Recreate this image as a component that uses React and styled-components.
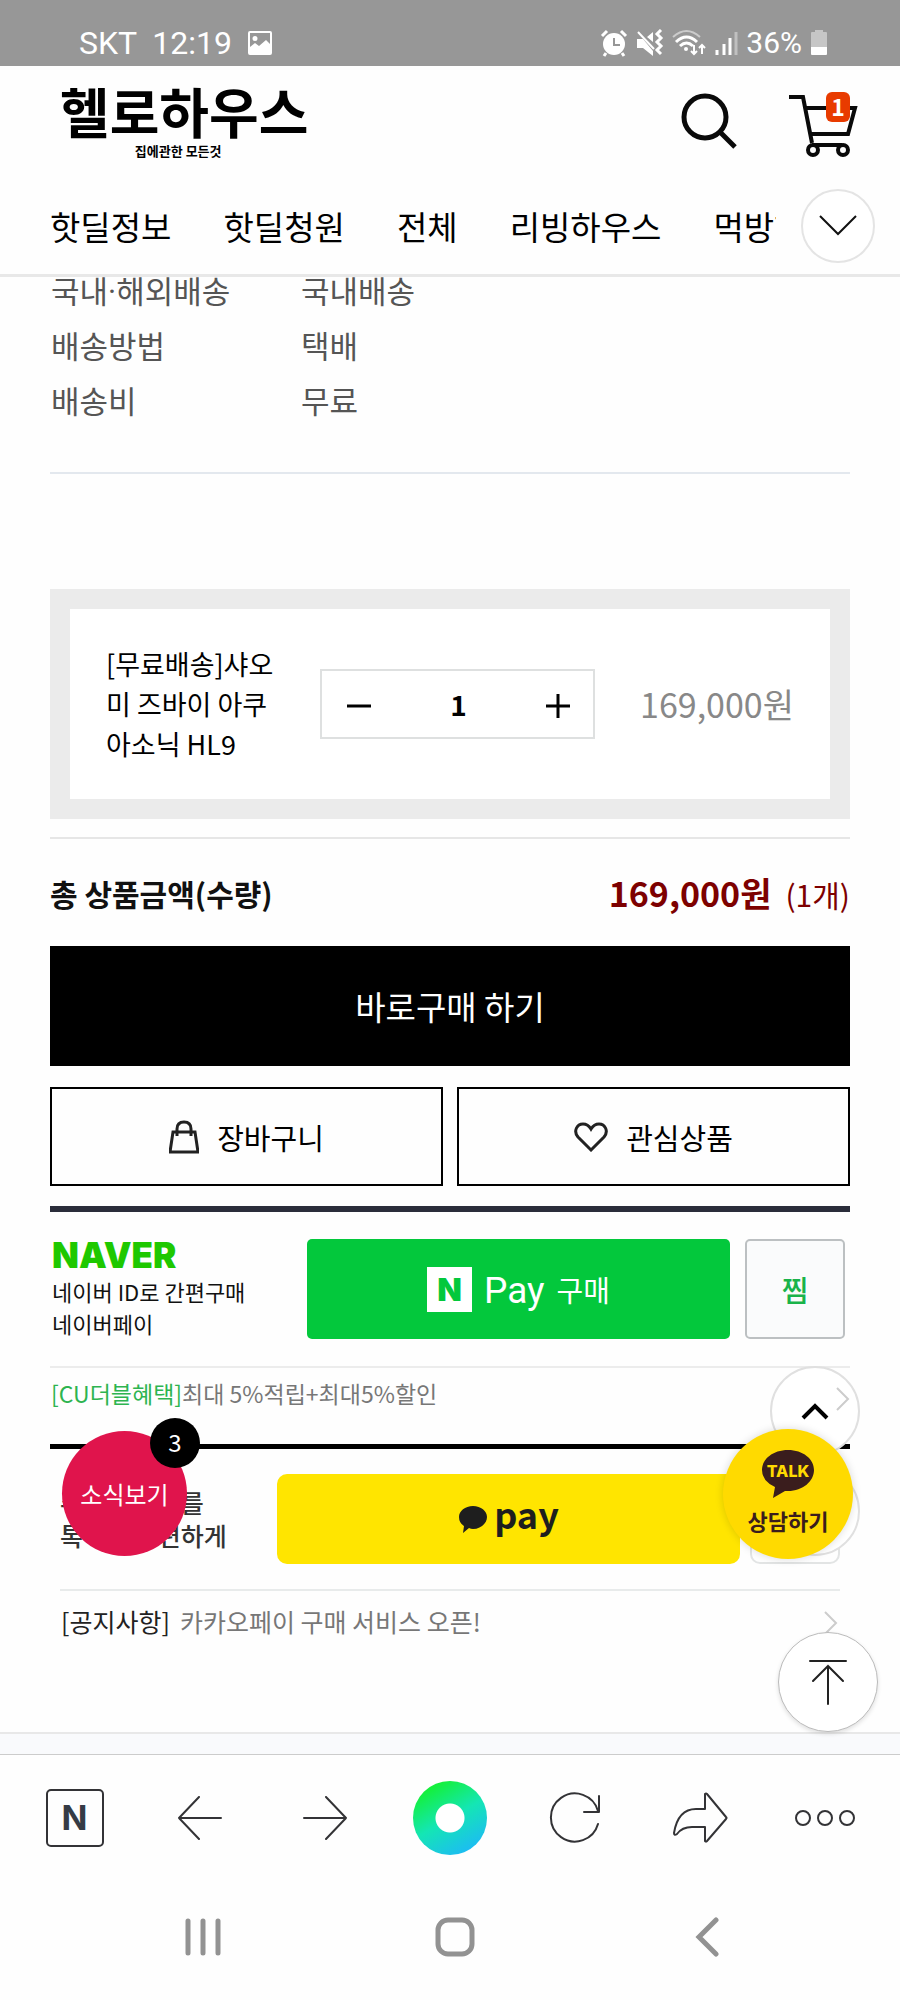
import { useState } from "react";
import styled, { createGlobalStyle } from "styled-components";

const colors = {
    line: "#e8e8e8",
    naver: "#03c83c",
    kakao: "#ffe500",
    news: "#e0144c",
    price: "#7d0000",
    icon: "#333336",
};

const categories = ["핫딜정보", "핫딜청원", "전체", "리빙하우스", "먹방하우스"];

const delivery = [
    { label: "국내·해외배송", value: "국내배송" },
    { label: "배송방법", value: "택배" },
    { label: "배송비", value: "무료" },
];

const PRICE = 169000;

const StatusBar = () => (
    <StatusDiv>
        <div className="side">
            <span>SKT</span>
            <span>12:19</span>
            <svg width="26" height="26" viewBox="0 0 26 26">
                <path
                    fill="#fff"
                    fillRule="evenodd"
                    d="M3 1h20q2 0 2 2v20q0 2-2 2H3q-2 0-2-2V3q0-2 2-2zM3 3v14l5-4 4 3 7-6 4 4V3zM8 6a2.5 2.5 0 1 1 0 5a2.5 2.5 0 0 1 0-5z"
                />
            </svg>
        </div>
        <div className="side icons">
            <svg width="28" height="28" viewBox="0 0 28 28">
                <circle cx="14" cy="15" r="11" fill="#fff" />
                <path
                    d="M2 7l5-5M26 7l-5-5M6 24l-2 3M22 24l2 3"
                    stroke="#fff"
                    strokeWidth="3"
                />
                <path d="M14 9v7h6" fill="none" stroke="#979797" strokeWidth="2" />
            </svg>
            <svg width="28" height="28" viewBox="0 0 28 28">
                <path d="M1 10h6l10 12v5L7 19H1zM17 3v10l-6-5z" fill="#fff" />
                <path d="M2 3l16 17" stroke="#fff" strokeWidth="2" />
                <path
                    d="M25 1l-4 4 4 4-4 4 4 4-4 4 4 4"
                    fill="none"
                    stroke="#fff"
                    strokeWidth="3"
                />
            </svg>
            <svg width="34" height="28" viewBox="0 0 34 28" fill="none" stroke="#fff">
                <path d="M1 8q13.5-12 27 0" strokeWidth="2" opacity=".5" />
                <path d="M4 13q10.5-10 21 0M8 17q6.5-6 13 0" strokeWidth="3" />
                <circle cx="14" cy="20" r="2" fill="#fff" stroke="none" />
                <path
                    d="M22 16v9m-3-3l3 3 3-3M30 25v-9m-3 3l3-3 3 3"
                    strokeWidth="2"
                />
            </svg>
            <svg width="24" height="28" viewBox="0 0 24 28" stroke="#fff" strokeWidth="3">
                <path d="M3 21v5M10 15v11M16 9v17" />
                <path d="M22 3v23" opacity=".4" />
            </svg>
            <span className="percent">36%</span>
            <svg width="18" height="28" viewBox="0 0 18 28" fill="#fff">
                <path d="M5 1h8v2h3q1 0 1 1v15H1V4q0-1 1-1h3z" opacity=".45" />
                <path d="M1 18h16v7q0 1-1 1H2q-1 0-1-1z" />
            </svg>
        </div>
    </StatusDiv>
);

const Header = () => (
    <HeaderDiv>
        <div className="top">
            <Logo href="#home">
                <strong>헬로하우스</strong>
                <small>집에관한 모든것</small>
            </Logo>
            <div className="actions">
                <IconButton aria-label="검색">
                    <svg width="58" height="58" viewBox="0 0 58 58" fill="none" stroke="#0a0a0a">
                        <circle cx="25" cy="25" r="21" strokeWidth="5" />
                        <path d="M40 40l15 15" strokeWidth="5" />
                    </svg>
                </IconButton>
                <IconButton aria-label="장바구니 보기">
                    <svg width="70" height="66" viewBox="0 0 70 66" fill="none" stroke="#0a0a0a" strokeWidth="4">
                        <path d="M1 5h14l9 46M17 16h50l-7 26H23M24 53h30" />
                        <circle cx="25" cy="58" r="5" />
                        <circle cx="55" cy="58" r="5" />
                    </svg>
                    <span className="count">1</span>
                </IconButton>
            </div>
        </div>
        <div className="nav">
            <Categories>
                {categories.map((name) => (
                    <a href="#category" key={name}>
                        {name}
                    </a>
                ))}
            </Categories>
            <RoundButton $size={74} aria-label="카테고리 펼치기">
                <svg width="40" height="24" viewBox="0 0 40 24" fill="none" stroke="#111" strokeWidth="2">
                    <path d="M2 2l18 18L38 2" />
                </svg>
            </RoundButton>
        </div>
    </HeaderDiv>
);

const OptionBox = ({ count, setCount }) => (
    <OptionDiv>
        <p className="name">[무료배송]샤오미 즈바이 아쿠아소닉 HL9</p>
        <Stepper>
            <button aria-label="수량 감소" onClick={() => setCount(Math.max(1, count - 1))}>
                <svg width="24" height="24" viewBox="0 0 24 24" stroke="#000" strokeWidth="3">
                    <path d="M0 12h24" />
                </svg>
            </button>
            <input
                aria-label="수량"
                value={count}
                onChange={(e) => setCount(Number(e.target.value) || 1)}
            />
            <button aria-label="수량 증가" onClick={() => setCount(count + 1)}>
                <svg width="24" height="24" viewBox="0 0 24 24" stroke="#000" strokeWidth="3">
                    <path d="M0 12h24M12 0v24" />
                </svg>
            </button>
        </Stepper>
        <p className="price">{(PRICE * count).toLocaleString("en-US")}원</p>
    </OptionDiv>
);

const NaverPay = () => (
    <NaverDiv>
        <div className="row">
            <div className="text">
                <strong>NAVER</strong>
                <p>네이버 ID로 간편구매</p>
                <p>네이버페이</p>
            </div>
            <button className="pay">
                <span className="n">N</span>
                <span className="latin">Pay</span>
                <span>구매</span>
            </button>
            <button className="zzim">찜</button>
        </div>
        <a className="benefit" href="#benefit">
            <span>
                <em>[CU더블혜택]</em>최대 5%적립+최대5%할인
            </span>
            <Arrow />
        </a>
    </NaverDiv>
);

const KakaoPay = () => (
    <KakaoDiv>
        <div className="row">
            <p className="text">
                주문과 결제를
                <br />
                톡에서 간편하게
            </p>
            <button className="pay">
                <svg width="30" height="29" viewBox="0 0 30 29" fill="#1e1e1e">
                    <path d="M15 1c8 0 14 5 14 11s-6 12-14 12q-2 0-4-1l-6 5 1-7Q1 18 1 12C1 6 7 1 15 1z" />
                </svg>
                <span>pay</span>
            </button>
            <button className="wish" aria-label="찜하기" />
        </div>
        <a className="notice" href="#notice">
            <span>
                <em>[공지사항]</em>카카오페이 구매 서비스 오픈!
            </span>
            <Arrow />
        </a>
    </KakaoDiv>
);

const Arrow = () => (
    <svg className="arrow" width="14" height="26" viewBox="0 0 14 26" fill="none" stroke="#ccc" strokeWidth="2">
        <path d="M1 2l11 11L1 24" />
    </svg>
);

const Floating = () => (
    <>
        <NewsButton>
            소식보기
            <span>3</span>
        </NewsButton>
        <FloatButton $size={90} $right={40} $bottom={276} aria-label="위로">
            <svg width="28" height="18" viewBox="0 0 28 18" fill="none" stroke="#000" strokeWidth="4">
                <path d="M2 16L14 4l12 12" />
            </svg>
        </FloatButton>
        <FloatButton $size={90} $right={40} $bottom={176} aria-label="아래로" />
        <TalkButton>
            <svg width="54" height="50" viewBox="0 0 54 50">
                <path
                    fill="#3a1d1d"
                    d="M27 1c15 0 26 9 26 20S42 42 27 42h-3l-12 7 2-11Q1 32 1 21C1 10 12 1 27 1z"
                />
                <text x="27" y="28" textAnchor="middle">
                    TALK
                </text>
            </svg>
            상담하기
        </TalkButton>
        <FloatButton $size={100} $right={22} $bottom={0} $dark aria-label="맨 위로">
            <svg width="40" height="48" viewBox="0 0 40 48" fill="none" stroke="#222" strokeWidth="2" strokeLinecap="round">
                <path d="M2 3h36M20 46V8M5 23L20 8l15 15" />
            </svg>
        </FloatButton>
    </>
);

const Toolbar = () => (
    <ToolbarNav>
        <button aria-label="네이버 홈">
            <span className="n">N</span>
        </button>
        <button aria-label="뒤로">
            <svg width="46" height="44" viewBox="0 0 46 44">
                <path d="M44 22H2M22 1L2 22l20 21" />
            </svg>
        </button>
        <button aria-label="앞으로">
            <svg width="46" height="44" viewBox="0 0 46 44">
                <path d="M2 22h42M24 1l20 21-20 21" />
            </svg>
        </button>
        <button aria-label="그린닷">
            <span className="dot" />
        </button>
        <button aria-label="새로고침">
            <svg width="52" height="52" viewBox="0 0 52 52">
                <path d="M49 32A24 24 0 1 1 49 19M50 4v16H35" />
            </svg>
        </button>
        <button aria-label="공유">
            <svg width="56" height="52" viewBox="0 0 56 52">
                <path d="M33 2q1-1 2 0l19 23q1 1 0 2L35 49q-1 1-2 0V35H20Q10 35 5 42q-3 2-3-1Q6 17 24 17h9z" />
            </svg>
        </button>
        <button aria-label="더보기">
            <svg width="62" height="18" viewBox="0 0 62 18">
                <circle cx="9" cy="9" r="7" />
                <circle cx="31" cy="9" r="7" />
                <circle cx="53" cy="9" r="7" />
            </svg>
        </button>
    </ToolbarNav>
);

const SystemBar = () => (
    <SystemNav>
        <button aria-label="최근 앱">
            <svg width="36" height="40" viewBox="0 0 36 40">
                <path d="M3 4v32M18 4v32M33 4v32" />
            </svg>
        </button>
        <button aria-label="홈 화면">
            <svg width="40" height="40" viewBox="0 0 40 40">
                <rect x="3" y="3" width="34" height="34" rx="10" />
            </svg>
        </button>
        <button aria-label="이전">
            <svg width="24" height="40" viewBox="0 0 24 40">
                <path d="M21 3L4 20l17 17" />
            </svg>
        </button>
    </SystemNav>
);

const App = () => {
    const [count, setCount] = useState(1);

    return (
        <>
            <GlobalStyle />
            <StatusBar />
            <Header />
            <Main>
                <Delivery>
                    {delivery.map(({ label, value }) => (
                        <div key={label}>
                            <dt>{label}</dt>
                            <dd>{value}</dd>
                        </div>
                    ))}
                </Delivery>
                <OptionBox count={count} setCount={setCount} />
                <Total>
                    <strong>총 상품금액(수량)</strong>
                    <p>
                        <b>{(PRICE * count).toLocaleString("en-US")}원</b>
                        <span>({count}개)</span>
                    </p>
                </Total>
                <BuyButton>바로구매 하기</BuyButton>
                <SubButtons>
                    <button>
                        <svg width="30" height="34" viewBox="0 0 30 34">
                            <path d="M4 12h22l3 20H1zM8 16v-7q0-7 7-7t7 7v7" />
                        </svg>
                        장바구니
                    </button>
                    <button>
                        <svg width="34" height="30" viewBox="0 0 34 30">
                            <path d="M17 28L4 15C-1 9 3 2 9 2q5 0 8 5q3-5 8-5c6 0 10 7 5 13z" />
                        </svg>
                        관심상품
                    </button>
                </SubButtons>
                <NaverPay />
                <KakaoPay />
                <Floating />
            </Main>
            <Band />
            <Toolbar />
            <SystemBar />
        </>
    );
};

const GlobalStyle = createGlobalStyle`
    * {
        box-sizing: border-box;
        margin: 0;
        padding: 0;
    }
    body {
        background: #fefefe;
        color: #111;
        font-family: "Noto Sans CJK KR", sans-serif;
    }
    button {
        border: none;
        background: none;
        color: inherit;
        font-family: inherit;
        cursor: pointer;
    }
    a {
        color: inherit;
        text-decoration: none;
    }
    em {
        font-style: normal;
    }
    svg {
        display: block;
        flex: none;
    }
`;

const StatusDiv = styled.div`
    height: 66px;
    padding: 20px 72px 0 79px;
    display: flex;
    justify-content: space-between;
    background: #979797;
    color: #fff;
    font-family: Roboto, sans-serif;
    font-size: 32px;
    line-height: 46px;

    .side {
        display: flex;
        align-items: center;
        gap: 15px;
    }
    .icons {
        gap: 8px;
    }
    .percent {
        font-size: 30px;
    }
`;

const HeaderDiv = styled.header`
    position: relative;
    z-index: 1;
    background: #fefefe;
    border-bottom: 3px solid ${colors.line};

    .top {
        height: 112px;
        padding: 0 42px 0 60px;
        display: flex;
        justify-content: space-between;
    }
    .actions {
        display: flex;
        align-items: flex-start;
        gap: 50px;
        padding-top: 26px;
    }
    .nav {
        height: 96px;
        padding: 0 25px 0 50px;
        display: flex;
        align-items: center;
        gap: 25px;
    }
`;

const Logo = styled.a`
    display: flex;
    flex-direction: column;
    align-items: center;
    color: #000;

    strong {
        font-size: 54px;
        line-height: 60px;
        padding-top: 15px;
    }
    small {
        font-size: 13px;
        font-weight: 700;
        line-height: 20px;
        margin-right: 12px;
    }
`;

const IconButton = styled.button`
    position: relative;

    .count {
        position: absolute;
        top: 0;
        right: 8px;
        width: 24px;
        height: 30px;
        border-radius: 6px;
        background: #e83b00;
        color: #fff;
        font-size: 23px;
        font-weight: 700;
        line-height: 28px;
    }
`;

const Categories = styled.nav`
    flex: 1;
    display: flex;
    gap: 52px;
    overflow: hidden;
    white-space: nowrap;
    font-size: 33px;
    line-height: 52px;
    color: #000;
`;

const RoundButton = styled.button`
    flex: none;
    width: ${({ $size }) => $size}px;
    height: ${({ $size }) => $size}px;
    display: flex;
    align-items: center;
    justify-content: center;
    border: 2px solid #e4e4e4;
    border-radius: 50%;
    background: #fff;
`;

const Main = styled.main`
    position: relative;
    padding: 0 50px 81px;
    border-bottom: 2px solid ${colors.line};
`;

const Delivery = styled.dl`
    margin: -12px 0 115px;
    padding-bottom: 42px;
    border-bottom: 2px solid #e3e8ee;
    font-family: Roboto, "Noto Sans CJK KR", sans-serif;
    font-size: 31px;
    line-height: 55px;
    color: #555;

    div {
        display: grid;
        grid-template-columns: 250px 1fr;
        height: 55px;
    }
    dt,
    dd {
        padding-left: 1px;
    }
`;

const OptionDiv = styled.section`
    min-height: 230px;
    padding: 0 36px;
    display: flex;
    align-items: center;
    border: 20px solid #ebebeb;
    background: #fff;

    .name {
        width: 176px;
        margin-right: 38px;
        font-size: 27px;
        line-height: 40px;
        word-break: break-all;
        color: #000;
    }
    .price {
        flex: 1;
        text-align: right;
        font-size: 34px;
        line-height: 52px;
        color: #888;
    }
`;

const Stepper = styled.div`
    width: 275px;
    height: 70px;
    padding: 0 18px 0 20px;
    display: flex;
    align-items: center;
    justify-content: space-between;
    border: 2px solid #dee0e0;

    button {
        padding: 8px 5px 4px;
    }
    input {
        width: 100px;
        border: none;
        background: none;
        text-align: center;
        font-family: inherit;
        font-size: 28px;
        font-weight: 700;
    }
`;

const Total = styled.div`
    height: 109px;
    margin-top: 18px;
    display: flex;
    align-items: center;
    justify-content: space-between;
    border-top: 2px solid #e6e6e6;
    font-size: 30px;

    p {
        display: flex;
        align-items: baseline;
        gap: 14px;
        color: ${colors.price};
    }
    b {
        font-size: 34px;
    }
`;

const BuyButton = styled.button`
    width: 100%;
    height: 120px;
    background: #000;
    color: #fff;
    font-size: 33px;
`;

const SubButtons = styled.div`
    margin-top: 21px;
    display: flex;
    gap: 14px;

    button {
        flex: 1;
        height: 99px;
        display: flex;
        align-items: center;
        justify-content: center;
        gap: 18px;
        border: 2px solid #000;
        color: #000;
        font-size: 29px;
    }
    svg {
        fill: none;
        stroke: #222;
        stroke-width: 3;
    }
`;

const NaverDiv = styled.section`
    margin-top: 20px;
    border-top: 6px solid #2a2d3a;
    border-bottom: 5px solid #000;

    .row {
        padding: 27px 5px 27px 2px;
        display: flex;
        border-bottom: 2px solid #ececec;
    }
    .text {
        width: 255px;
        color: #111;
        font-size: 22px;
        line-height: 32px;

        strong {
            display: block;
            margin-bottom: 4px;
            color: #1ec800;
            font-family: Inter, sans-serif;
            font-size: 35px;
            font-weight: 900;
        }
    }
    .pay {
        flex: 1;
        height: 100px;
        display: flex;
        align-items: center;
        justify-content: center;
        gap: 12px;
        border-radius: 5px;
        background: ${colors.naver};
        color: #fff;
        font-size: 29px;
    }
    .n {
        width: 45px;
        height: 45px;
        background: #fff;
        color: ${colors.naver};
        font-family: Inter, sans-serif;
        font-size: 32px;
        font-weight: 900;
        line-height: 45px;
    }
    .latin {
        font-family: Roboto, sans-serif;
        font-size: 37px;
        line-height: 50px;
        padding-top: 4px;
    }
    .zzim {
        width: 100px;
        height: 100px;
        margin-left: 15px;
        border: 2px solid #bcc0c2;
        border-radius: 5px;
        background: #fafbfc;
        color: #19b34a;
        font-size: 29px;
        font-weight: 500;
    }
    .benefit {
        height: 76px;
        padding: 8px 0 0 1px;
        display: flex;
        align-items: flex-start;
        justify-content: space-between;
        font-size: 23px;
        line-height: 34px;
        color: #777;
    }
    .benefit em {
        color: #2db450;
    }
    .arrow {
        position: relative;
        z-index: 1;
        margin-top: 10px;
    }
`;

const KakaoDiv = styled.section`
    padding: 0 10px;

    .row {
        padding: 25px 0;
        display: flex;
        align-items: center;
        border-bottom: 2px solid #e8ebeb;
    }
    .text {
        width: 217px;
        font-size: 25px;
        font-weight: 500;
        line-height: 33px;
        color: #333;
    }
    .pay {
        flex: 1;
        height: 90px;
        display: flex;
        align-items: center;
        justify-content: center;
        gap: 6px;
        border-radius: 10px;
        background: ${colors.kakao};
        color: #1e1e1e;
        font-size: 36px;
        font-weight: 700;
        line-height: 36px;
    }
    .pay span {
        padding-bottom: 12px;
    }
    .wish {
        width: 90px;
        height: 90px;
        margin-left: 10px;
        border: 2px solid #e2e4e4;
        border-radius: 10px;
    }
    .notice {
        height: 60px;
        padding-left: 1px;
        display: flex;
        align-items: center;
        justify-content: space-between;
        font-size: 25px;
        color: #777;
    }
    .notice em {
        margin-right: 10px;
        color: #222;
    }
    .arrow {
        margin: 4px 2px 0 0;
    }
`;

const NewsButton = styled.button`
    position: absolute;
    left: 62px;
    bottom: 176px;
    width: 125px;
    height: 125px;
    border-radius: 50%;
    background: ${colors.news};
    color: #fff;
    font-size: 24px;

    span {
        position: absolute;
        top: -13px;
        right: -13px;
        width: 50px;
        height: 50px;
        border-radius: 50%;
        background: #000;
        line-height: 48px;
    }
`;

const FloatButton = styled(RoundButton)`
    position: absolute;
    right: ${({ $right }) => $right}px;
    bottom: ${({ $bottom }) => $bottom}px;
    border: ${({ $dark }) => ($dark ? "1px solid #bbb" : "2px solid #e0e0e0")};
    box-shadow: ${({ $dark }) => ($dark ? "0 2px 4px rgba(0, 0, 0, 0.12)" : "none")};
`;

const TalkButton = styled.button`
    position: absolute;
    right: 47px;
    bottom: 173px;
    width: 130px;
    height: 130px;
    display: flex;
    flex-direction: column;
    align-items: center;
    gap: 5px;
    padding-top: 20px;
    border-radius: 50%;
    background: #ffda00;
    box-shadow: 0 0 8px rgba(0, 0, 0, 0.15);
    color: #3a1d1d;
    font-size: 22px;
    font-weight: 700;
    line-height: 32px;

    text {
        fill: #ffda00;
        font-family: Inter, sans-serif;
        font-size: 16px;
        font-weight: 800;
    }
`;

const Band = styled.div`
    height: 21px;
    background: #f9fafc;
    border-bottom: 1px solid #ccc;
`;

const ToolbarNav = styled.nav`
    height: 125px;
    padding: 0 12px;
    display: grid;
    grid-template-columns: repeat(7, 1fr);

    button {
        display: flex;
        align-items: center;
        justify-content: center;
    }
    svg {
        fill: none;
        stroke: ${colors.icon};
        stroke-width: 2;
        stroke-linecap: round;
        stroke-linejoin: round;
    }
    .n {
        width: 58px;
        height: 58px;
        border: 2px solid ${colors.icon};
        border-radius: 5px;
        color: #353b45;
        font-family: Inter, sans-serif;
        font-size: 34px;
        font-weight: 700;
        line-height: 54px;
    }
    .dot {
        width: 74px;
        height: 74px;
        border-radius: 50%;
        background: radial-gradient(circle, #fff 14px, transparent 15px),
            linear-gradient(150deg, #14f03c 15%, #14e6b4 50%, #1eb4ff 95%);
    }
`;

const SystemNav = styled.nav`
    height: 120px;
    padding: 0 67px 6px 77px;
    display: grid;
    grid-template-columns: repeat(3, 1fr);

    button {
        display: flex;
        align-items: center;
        justify-content: center;
    }
    svg {
        fill: none;
        stroke: #929292;
        stroke-width: 5;
        stroke-linecap: round;
    }
`;

export default App;
